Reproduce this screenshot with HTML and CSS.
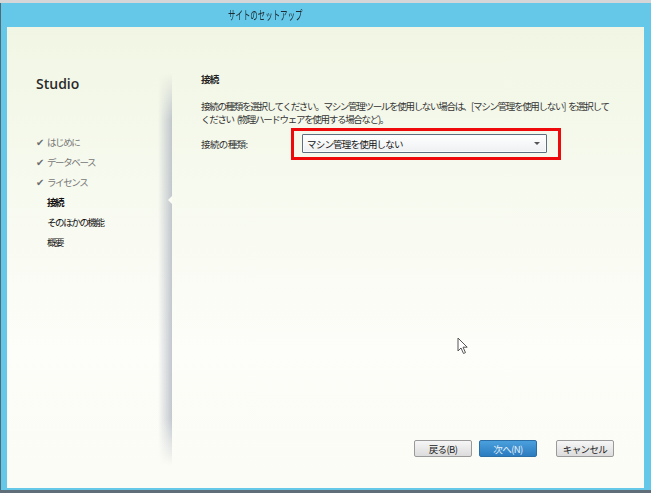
FILE: index.html
```html
<!DOCTYPE html>
<html lang="ja">
<head>
    <meta charset="UTF-8">
    <meta name="viewport" content="width=device-width, initial-scale=1.0">
    <title>サイトのセットアップ</title>
    <link rel="stylesheet" href="styles.css">
</head>
<body>
    <div class="desktop-strip"></div>

    <div class="window">
        <div class="titlebar">
            <span class="title">サイトのセットアップ</span>
        </div>

        <div class="client">
            <div class="sidebar">
                <div class="product">Studio</div>
                <ul class="steps">
                    <li class="done"><span class="check">✔</span>はじめに</li>
                    <li class="done"><span class="check">✔</span>データベース</li>
                    <li class="done"><span class="check">✔</span>ライセンス</li>
                    <li class="current">接続</li>
                    <li>そのほかの機能</li>
                    <li>概要</li>
                </ul>
                <div class="sidebar-shadow"></div>
                <div class="notch"></div>
            </div>

            <div class="main">
                <h2 class="page-title">接続</h2>
                <p class="intro">接続の種類を選択してください。マシン管理ツールを使用しない場合は、[マシン管理を使用しない] を選択して<br>ください (物理ハードウェアを使用する場合など)。</p>

                <div class="field">
                    <label class="field-label">接続の種類:</label>
                    <div class="highlight">
                        <div class="combo">
                            <span>マシン管理を使用しない</span>
                            <span class="combo-arrow"></span>
                        </div>
                    </div>
                </div>

                <div class="buttons">
                    <button class="btn">戻る(B)</button>
                    <button class="btn primary">次へ(N)</button>
                    <button class="btn cancel">キャンセル</button>
                </div>
            </div>

            <svg class="cursor" width="12" height="18" viewBox="0 0 12 18">
                <path d="M1 1 L1 14 L4 11 L6.5 16.5 L8.5 15.6 L6 10.2 L10.2 10.2 Z" fill="#fff" stroke="#555" stroke-width="1"/>
            </svg>
        </div>
    </div>

    <div class="taskbar-edge"></div>
</body>
</html>
```

FILE: styles.css
```css
body, html {
    margin: 0;
    padding: 0;
    font-family: "Noto Sans CJK JP", "Noto Sans", sans-serif;
    background: #d9dcde;
    overflow: hidden;
}

.desktop-strip {
    height: 3px;
    background: #d4d6d8;
}

.window {
    background: #66c8e8;
    border-left: 1px solid #4f6a78;
    padding: 0 7px 2px 6px;
}

.titlebar {
    height: 24px;
    line-height: 20px;
    padding-left: 221px;
    color: #1d2b33;
}

.title {
    display: inline-block;
    font-size: 12px;
    transform: scaleX(0.62);
    transform-origin: left center;
}

.client {
    height: 461px;
    display: flex;
    position: relative;
    background: linear-gradient(to bottom, #f1f6e4 0%, #f7faef 35%, #fdfdf9 70%, #fbfcf5 100%);
    color: #222;
}

/* left column with the wizard steps */
.sidebar {
    width: 136px;
    padding-left: 29px;
    position: relative;
    flex-shrink: 0;
}

.product {
    margin-top: 48px;
    font-family: "Open Sans", sans-serif;
    font-weight: 600;
    font-size: 14px;
    line-height: 18px;
    color: #2a2a2a;
}

.steps {
    list-style: none;
    margin: 39px 0 0 0;
    padding: 0;
}

.steps li {
    font-size: 9.5px;
    letter-spacing: -1.4px;
    line-height: 20px;
    height: 20px;
    padding-left: 11px;
    position: relative;
    color: #111;
}

.steps li.done {
    color: #777;
}

.steps li.current {
    font-weight: bold;
}

.check {
    position: absolute;
    left: 0;
    top: 0;
    font-size: 10px;
    letter-spacing: 0;
    color: #6f6f6f;
}

.sidebar-shadow {
    position: absolute;
    right: 0;
    top: 46px;
    bottom: 22px;
    width: 14px;
    background: linear-gradient(to right, rgba(190, 196, 204, 0), rgba(180, 186, 196, 0.8));
    -webkit-mask-image: linear-gradient(to bottom, transparent 0%, #000 12%, #000 88%, transparent 100%);
    mask-image: linear-gradient(to bottom, transparent 0%, #000 12%, #000 88%, transparent 100%);
}

.notch {
    position: absolute;
    right: 0;
    top: 169px;
    width: 0;
    height: 0;
    border-top: 4px solid transparent;
    border-bottom: 4px solid transparent;
    border-right: 4px solid #fbfcf6;
}

/* page content */
.main {
    flex: 1;
    display: flex;
    flex-direction: column;
    padding: 45px 30px 31px 29px;
}

.page-title {
    margin: 0;
    font-size: 9.5px;
    letter-spacing: -0.8px;
    line-height: 14px;
    font-weight: bold;
}

.intro {
    margin: 14px 0 0 0;
    font-size: 9.5px;
    letter-spacing: -1.3px;
    word-spacing: 2px;
    line-height: 13px;
    white-space: nowrap;
    color: #333;
}

.field {
    display: flex;
    align-items: center;
    margin-top: 2px;
}

.field-label {
    width: 90px;
    font-size: 9.5px;
    letter-spacing: -0.6px;
    color: #333;
}

.highlight {
    border: 3px solid #ee0a0a;
    padding: 3px 11px 4px 8px;
}

.combo {
    box-sizing: border-box;
    width: 245px;
    height: 19px;
    border: 1px solid #5d6f80;
    border-radius: 1px;
    background: linear-gradient(to bottom, #ffffff, #eef0f2);
    box-shadow: inset 0 0 0 1px #fafbfc;
    display: flex;
    align-items: center;
    justify-content: space-between;
    padding: 0 6px 0 4px;
    font-size: 9.5px;
    letter-spacing: -0.8px;
    color: #111;
}

.combo-arrow {
    width: 0;
    height: 0;
    border-left: 3px solid transparent;
    border-right: 3px solid transparent;
    border-top: 3px solid #555;
}

.buttons {
    margin-top: auto;
    display: flex;
    justify-content: flex-end;
}

.btn {
    width: 58px;
    height: 17px;
    padding: 0;
    font-family: inherit;
    font-size: 9.5px;
    letter-spacing: -0.6px;
    color: #222;
    border: 1px solid #9a9a9a;
    border-radius: 2px;
    background: linear-gradient(to bottom, #f6f6f6, #dcdcdc);
    margin-left: 7px;
}

.btn.primary {
    border-color: #2c6ea6;
    background: linear-gradient(to bottom, #4aa0dc, #2c7cc0);
    color: #e6f1fb;
}

.btn.cancel {
    margin-left: 19px;
}

.cursor {
    position: absolute;
    left: 450px;
    top: 310px;
}

.taskbar-edge {
    height: 3px;
    background: #5f6e78;
}
```
